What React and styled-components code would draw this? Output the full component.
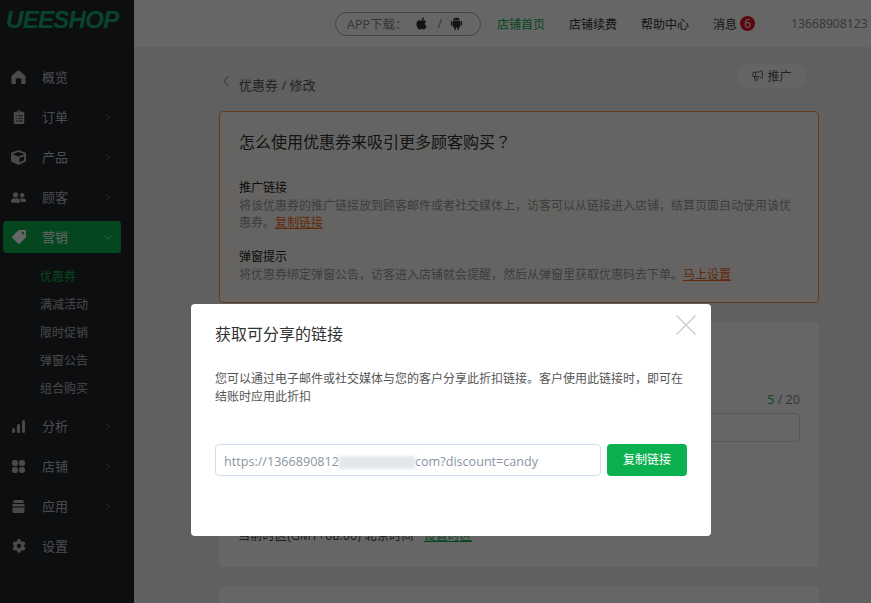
import styled, { createGlobalStyle } from 'styled-components';
import { ChevronRight, ChevronDown, ChevronLeft, Megaphone } from 'lucide-react';
import { FaClipboardList, FaCube, FaUserFriends, FaTag, FaCog } from 'react-icons/fa';
import { AiFillApple, AiFillAndroid } from 'react-icons/ai';

const GlobalStyle = createGlobalStyle`
  html, body {
    margin: 0;
    padding: 0;
    height: 100%;
    overflow: hidden;
    font-family: "Open Sans", "Noto Sans CJK SC", sans-serif;
  }
  * { box-sizing: border-box; }
`;

const Page = styled.div`
  display: flex;
  width: 871px;
  height: 603px;
  overflow: hidden;
  background: #f0f1f3;
`;

const Sidebar = styled.aside`
  width: 134px;
  flex: none;
  background: #22252a;
  display: flex;
  flex-direction: column;
`;

const Logo = styled.div`
  height: 57px;
  padding: 7px 0 0 6px;
  font-family: "Liberation Sans", sans-serif;
  font-size: 24px;
  line-height: 26px;
  font-weight: 700;
  font-style: italic;
  letter-spacing: -0.7px;
  color: #12a874;
`;

const Nav = styled.nav`
  display: flex;
  flex-direction: column;
`;

const NavItem = styled.div`
  height: 32px;
  margin: 4px 13px 4px 3px;
  padding: 0 8px;
  display: flex;
  align-items: center;
  border-radius: 4px;
  background: ${(p) => (p.$active ? '#0cb14f' : 'transparent')};
  color: ${(p) => (p.$active ? '#fff' : '#bcbec2')};
  font-size: 13px;
`;

const NavIcon = styled.span`
  width: 15px;
  height: 16px;
  flex: none;
  margin-right: 16px;
  color: ${(p) => (p.$active ? '#fff' : '#b5b7bb')};
  display: flex;
  align-items: center;
  justify-content: center;
`;

const NavLabel = styled.span`
  flex: 1;
  padding-bottom: 2px;
`;

const Arrow = styled.span`
  display: flex;
  color: ${(p) => (p.$active ? '#fff' : '#999')};
  margin-right: -1px;
`;

const TagIcon = styled(FaTag)`
  transform: scaleX(-1);
`;

const SubList = styled.div`
  display: flex;
  flex-direction: column;
  padding: 6px 0 3px 40px;
`;

const SubItem = styled.div`
  height: 28px;
  line-height: 28px;
  font-size: 12px;
  color: ${(p) => (p.$active ? '#0cb14f' : '#b5b7bb')};
`;

const Main = styled.div`
  flex: 1;
  min-width: 0;
  display: flex;
  flex-direction: column;
`;

const Topbar = styled.header`
  height: 47px;
  flex: none;
  background: #fff;
  display: flex;
  align-items: center;
  padding: 0 0 0 201px;
  font-size: 12px;
  color: #333;
  white-space: nowrap;
`;

const AppPill = styled.div`
  width: 146px;
  height: 24px;
  flex: none;
  margin-right: 16px;
  border: 1px solid #aaa;
  border-radius: 12px;
  padding-left: 11px;
  display: flex;
  align-items: center;
  font-size: 12.5px;
  color: #888;
`;

const PillIcon = styled.span`
  display: flex;
  color: #333;
  margin-left: ${(p) => p.$gap}px;
`;

const Slash = styled.span`
  margin-left: 8px;
  color: #888;
`;

const TopLink = styled.span`
  margin-right: ${(p) => p.$gap}px;
  color: ${(p) => (p.$active ? '#0cb14f' : '#333')};
`;

const Badge = styled.span`
  width: 15px;
  height: 15px;
  flex: none;
  margin-left: -21px;
  margin-right: 36px;
  border-radius: 50%;
  background: #e0101e;
  color: #fff;
  text-align: center;
  line-height: 15px;
  font-size: 12px;
`;

const Account = styled.span`
  color: #888;
  font-size: 12.2px;
`;

const Content = styled.main`
  flex: 1;
  padding: 16px 0 0 85px;
  width: 685px;
`;

const HeadRow = styled.div`
  display: flex;
  justify-content: space-between;
  align-items: center;
  height: 32px;
  margin-bottom: 16px;
  padding-right: 13px;
`;

const Crumb = styled.div`
  display: flex;
  align-items: center;
  font-size: 13px;
  color: #555;
  margin-top: 10px;
`;

const BackIcon = styled.span`
  display: flex;
  color: #666;
  margin: -7px 4px 0 -2px;
`;

const PromoButton = styled.div`
  width: 69px;
  height: 24px;
  margin-top: -7px;
  border-radius: 12px;
  background: #f9f9f9;
  display: flex;
  align-items: center;
  justify-content: center;
  gap: 3px;
  font-size: 12px;
  color: #555;
`;

const Notice = styled.section`
  height: 192px;
  border: 1px solid #f39a45;
  border-radius: 4px;
  background: #fdfaf5;
  padding: 19px 19px;
`;

const NoticeTitle = styled.h2`
  margin: 0 0 25px;
  font-size: 16px;
  line-height: 22px;
  font-weight: 400;
  color: #333;
`;

const NoticeBlock = styled.div`
  margin-bottom: 16px;
  font-size: 12px;
  line-height: 17px;
  color: #999;
`;

const BlockHead = styled.div`
  color: #222;
  line-height: 19px;
`;

// the traditional CJK face centres its full-width question mark, as the reference does
const Mark = styled.span`
  font-family: "Noto Sans CJK TC", sans-serif;
  line-height: 0;
`;

const OrangeLink = styled.a`
  color: #f26a1b;
  text-decoration: underline;
`;

const Card = styled.section`
  background: #fff;
  border-radius: 4px;
  margin-top: 19px;
  height: ${(p) => p.$height}px;
  padding: 0 19px;
  display: flex;
  flex-direction: column;
`;

const CounterRow = styled.div`
  margin-top: 69px;
  height: 18px;
  line-height: 18px;
  text-align: right;
  font-size: 12.6px;
  color: #888;
`;

const CounterCurrent = styled.span`
  color: #0cb14f;
`;

const TitleInput = styled.div`
  margin-top: 4px;
  height: 29px;
  border: 1px solid #d9d9de;
  border-radius: 4px;
`;

const TimeZone = styled.div`
  margin-top: auto;
  padding-bottom: 23px;
  font-size: 12px;
  color: #444;
`;

const TimeZoneText = styled.span`
  letter-spacing: 0.3px;
`;

const GreenLink = styled.a`
  color: #0cb14f;
  text-decoration: underline;
  margin-left: 10px;
`;

const Overlay = styled.div`
  position: fixed;
  inset: 0;
  background: rgba(0, 0, 0, 0.6);
  padding: 304px 0 0 191px;
`;

const Dialog = styled.div`
  position: relative;
  width: 520px;
  height: 232px;
  background: #fff;
  border-radius: 4px;
  padding: 19px 24px 0;
`;

const CloseButton = styled.svg`
  position: absolute;
  top: 11px;
  right: 15px;
  width: 20px;
  height: 20px;
  stroke: #c8c8c8;
  stroke-width: 1.2;
  fill: none;
`;

const DialogTitle = styled.h3`
  margin: 0 0 25px;
  font-size: 16px;
  line-height: 22px;
  font-weight: 400;
  color: #333;
`;

const DialogText = styled.p`
  margin: 0 0 38px;
  font-size: 12px;
  line-height: 18px;
  color: #555;
`;

const LinkRow = styled.div`
  display: flex;
  gap: 6px;
`;

const LinkField = styled.div`
  width: 386px;
  height: 32px;
  border: 1px solid #cfdfee;
  border-radius: 4px;
  padding-left: 8px;
  line-height: 33px;
  font-size: 12.6px;
  color: #8a94a3;
  white-space: nowrap;
`;

const Blur = styled.span`
  display: inline-block;
  width: 76px;
  height: 13px;
  vertical-align: middle;
  background: #e4e7ea;
  filter: blur(1.5px);
`;

const CopyButton = styled.div`
  width: 80px;
  height: 32px;
  border-radius: 4px;
  background: #0cb14f;
  color: #fff;
  font-size: 12px;
  line-height: 32px;
  text-align: center;
`;

const Home = () => (
  <svg width="15" height="14" viewBox="0 0 15 14" fill="currentColor">
    <path d="M7.5 0.5C8 0.5 8.4 0.7 8.8 1L14 5.6C14.5 6 14.6 6.4 14.6 7V13a1 1 0 0 1-1 1H10.2V9.6a1.4 1.4 0 0 0-1.4-1.4H6.2a1.4 1.4 0 0 0-1.4 1.4V14H1.4a1 1 0 0 1-1-1V7C0.4 6.4 0.5 6 1 5.6L6.2 1C6.6 0.7 7 0.5 7.5 0.5z" />
  </svg>
);

const Bars = () => (
  <svg width="15" height="14" viewBox="0 0 15 14" fill="currentColor">
    <rect x="1" y="9" width="3" height="5" rx="1.5" />
    <rect x="6" y="5" width="3" height="9" rx="1.5" />
    <rect x="11" y="1" width="3" height="13" rx="1.5" />
  </svg>
);

const Grid = () => (
  <svg width="15" height="15" viewBox="0 0 15 15" fill="currentColor">
    <rect x="1" y="1" width="6" height="6" rx="2.5" />
    <rect x="8" y="1" width="6" height="6" rx="2.5" />
    <rect x="1" y="8" width="6" height="6" rx="2.5" />
    <rect x="8" y="8" width="6" height="6" rx="2.5" />
  </svg>
);

const Store = () => (
  <svg width="15" height="15" viewBox="0 0 15 15" fill="currentColor">
    <path d="M3 1h9l1 3H2z" />
    <rect x="1.5" y="5" width="12" height="2.4" />
    <path d="M1.5 8.6h12V13a1 1 0 0 1-1 1h-10a1 1 0 0 1-1-1z" />
  </svg>
);

const navTop = [
  { label: '概览', icon: <Home /> },
  { label: '订单', icon: <FaClipboardList size={14} />, arrow: true },
  { label: '产品', icon: <FaCube size={15} />, arrow: true },
  { label: '顾客', icon: <FaUserFriends size={15} />, arrow: true },
];

const navBottom = [
  { label: '分析', icon: <Bars />, arrow: true },
  { label: '店铺', icon: <Grid />, arrow: true },
  { label: '应用', icon: <Store />, arrow: true },
  { label: '设置', icon: <FaCog size={14} /> },
];

const subItems = ['优惠券', '满减活动', '限时促销', '弹窗公告', '组合购买'];

const renderNav = (item) => (
  <NavItem key={item.label}>
    <NavIcon>{item.icon}</NavIcon>
    <NavLabel>{item.label}</NavLabel>
    {item.arrow && (
      <Arrow>
        <ChevronRight size={13} strokeWidth={1.2} />
      </Arrow>
    )}
  </NavItem>
);

const App = () => {
  return (
    <>
      <GlobalStyle />
      <Page>
        <Sidebar>
          <Logo>UEESHOP</Logo>
          <Nav>
            {navTop.map(renderNav)}
            <NavItem $active>
              <NavIcon $active>
                <TagIcon size={14} />
              </NavIcon>
              <NavLabel>营销</NavLabel>
              <Arrow $active>
                <ChevronDown size={13} strokeWidth={1.2} />
              </Arrow>
            </NavItem>
            <SubList>
              {subItems.map((s, i) => (
                <SubItem key={s} $active={i === 0}>
                  {s}
                </SubItem>
              ))}
            </SubList>
            {navBottom.map(renderNav)}
          </Nav>
        </Sidebar>
        <Main>
          <Topbar>
            <AppPill>
              APP下载：
              <PillIcon $gap={7}>
                <AiFillApple size={15} />
              </PillIcon>
              <Slash>/</Slash>
              <PillIcon $gap={7}>
                <AiFillAndroid size={15} />
              </PillIcon>
            </AppPill>
            <TopLink $active $gap={24}>店铺首页</TopLink>
            <TopLink $gap={24}>店铺续费</TopLink>
            <TopLink $gap={24}>帮助中心</TopLink>
            <TopLink $gap={24}>消息</TopLink>
            <Badge>6</Badge>
            <Account>13668908123</Account>
          </Topbar>
          <Content>
            <HeadRow>
              <Crumb>
                <BackIcon>
                  <ChevronLeft size={18} strokeWidth={1.2} />
                </BackIcon>
                优惠券 / 修改
              </Crumb>
              <PromoButton>
                <Megaphone size={13} strokeWidth={1.6} />
                推广
              </PromoButton>
            </HeadRow>
            <Notice>
              <NoticeTitle>
                怎么使用优惠券来吸引更多顾客购买<Mark>？</Mark>
              </NoticeTitle>
              <NoticeBlock>
                <BlockHead>推广链接</BlockHead>
                将该优惠券的推广链接放到顾客邮件或者社交媒体上，访客可以从链接进入店铺，结算页面自动使用该优惠券。
                <OrangeLink>复制链接</OrangeLink>
              </NoticeBlock>
              <NoticeBlock>
                <BlockHead>弹窗提示</BlockHead>
                将优惠券绑定弹窗公告，访客进入店铺就会提醒，然后从弹窗里获取优惠码去下单。
                <OrangeLink>马上设置</OrangeLink>
              </NoticeBlock>
            </Notice>
            <Card $height={245}>
              <CounterRow>
                <CounterCurrent>5</CounterCurrent> / 20
              </CounterRow>
              <TitleInput />
              <TimeZone>
                <TimeZoneText>当前时区(GMT+08:00) 北京时间</TimeZoneText>
                <GreenLink>设置时区</GreenLink>
              </TimeZone>
            </Card>
            <Card $height={60} />
          </Content>
        </Main>
      </Page>
      <Overlay>
        <Dialog>
          <CloseButton viewBox="0 0 20 20">
            <path d="M0.5 0.5L19.5 19.5M19.5 0.5L0.5 19.5" />
          </CloseButton>
          <DialogTitle>获取可分享的链接</DialogTitle>
          <DialogText>
            您可以通过电子邮件或社交媒体与您的客户分享此折扣链接。客户使用此链接时，即可在结账时应用此折扣
          </DialogText>
          <LinkRow>
            <LinkField>
              https://1366890812<Blur />com?discount=candy
            </LinkField>
            <CopyButton>复制链接</CopyButton>
          </LinkRow>
        </Dialog>
      </Overlay>
    </>
  );
};

export default App;
